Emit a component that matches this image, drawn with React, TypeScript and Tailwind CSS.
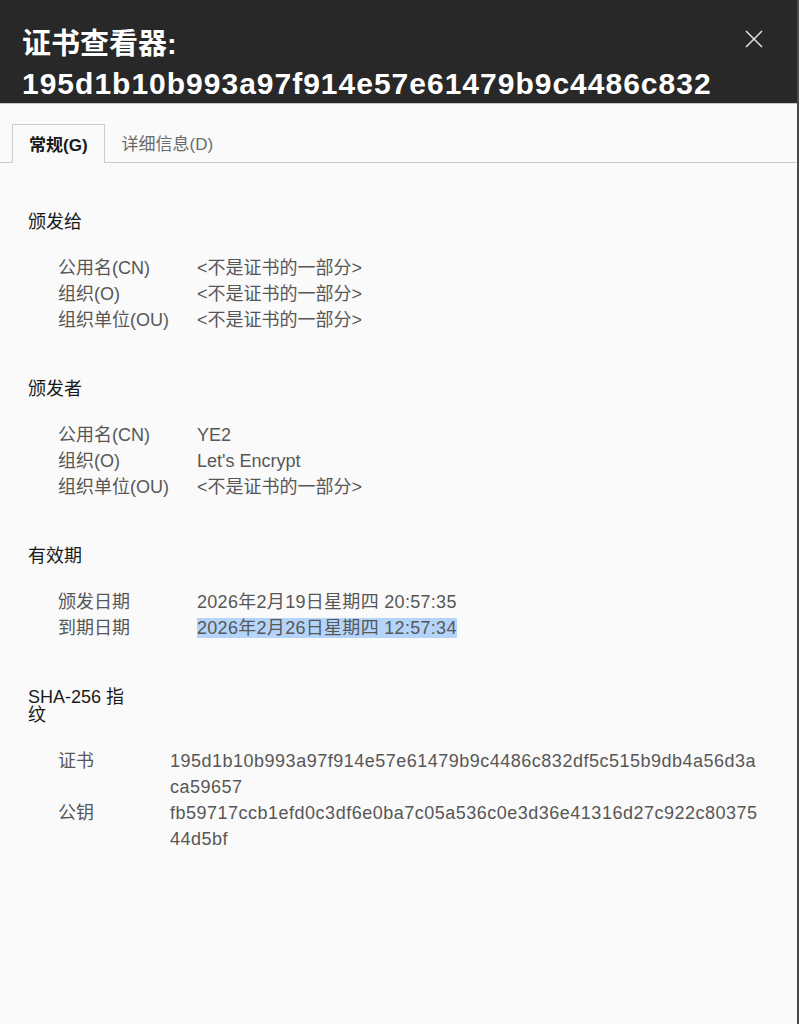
import type { ReactNode } from 'react'

// 证书查看器 — "常规" 页。每个分组一个标题，下面是缩进的 标签/值 两列。

const FONT = { fontFamily: '"Liberation Sans", "Noto Sans CJK SC", sans-serif' }
const NOT_PART = '<不是证书的一部分>'

type Row = { label: string; value: ReactNode }

const sections: { title: string; labelWidth: string; valueClass: string; rows: Row[] }[] = [
  {
    title: '颁发给',
    labelWidth: 'w-[139px]',
    valueClass: 'min-w-0 flex-1',
    rows: [
      { label: '公用名(CN)', value: NOT_PART },
      { label: '组织(O)', value: NOT_PART },
      { label: '组织单位(OU)', value: NOT_PART },
    ],
  },
  {
    title: '颁发者',
    labelWidth: 'w-[139px]',
    valueClass: 'min-w-0 flex-1',
    rows: [
      { label: '公用名(CN)', value: 'YE2' },
      { label: '组织(O)', value: "Let's Encrypt" },
      { label: '组织单位(OU)', value: NOT_PART },
    ],
  },
  {
    title: '有效期',
    labelWidth: 'w-[139px]',
    valueClass: 'min-w-0 flex-1 tracking-[0.3px]',
    rows: [
      { label: '颁发日期', value: '2026年2月19日星期四 20:57:35' },
      {
        label: '到期日期',
        value: <span className="bg-[#b5d4fa]">2026年2月26日星期四 12:57:34</span>,
      },
    ],
  },
  {
    title: 'SHA-256 指纹',
    labelWidth: 'w-[112px]',
    valueClass: 'min-w-0 flex-1 break-all tracking-[0.5px]',
    rows: [
      { label: '证书', value: '195d1b10b993a97f914e57e61479b9c4486c832df5c515b9db4a56d3aca59657' },
      { label: '公钥', value: 'fb59717ccb1efd0c3df6e0ba7c05a536c0e3d36e41316d27c922c8037544d5bf' },
    ],
  },
]

function CloseIcon() {
  return (
    <svg width="20" height="20" viewBox="0 0 20 20" fill="none" stroke="#e0e0e0" strokeWidth="1.6">
      <line x1="2" y1="2" x2="18" y2="18" />
      <line x1="18" y1="2" x2="2" y2="18" />
    </svg>
  )
}

export default function App() {
  return (
    <div className="flex min-h-screen w-full flex-col border-r-2 border-[#4a4a4a] bg-[#fafafa]" style={FONT}>
      {/* 标题栏 */}
      <header className="flex h-[104px] items-start justify-between border-b border-[#c4c4c4] bg-[#282828] pl-[22px] pr-[33px] pt-[24px]">
        <h1 className="text-[29px] font-bold leading-[40px] text-white">
          <div>证书查看器:</div>
          <div className="text-[30px] tracking-[1px]">195d1b10b993a97f914e57e61479b9c4486c832</div>
        </h1>
        <button className="mt-[5px]">
          <CloseIcon />
        </button>
      </header>

      {/* 页签 */}
      <nav className="flex border-b border-[#cccccc] pl-[12px] pt-[20px]">
        <div className="-mb-px flex h-[39px] items-center border border-b-0 border-[#cccccc] bg-[#fafafa] px-[16px] pt-[4px] text-[17px] font-bold text-[#1a1a1a]">
          常规(G)
        </div>
        <div className="flex h-[38px] items-center px-[17px] pt-[4px] text-[17px] text-[#6a6a6a]">详细信息(D)</div>
      </nav>

      <main className="pl-[28px] pr-[36px] pt-[3px]">
        {sections.map((s) => (
          <section key={s.title} className="pt-[47px]">
            <h2 className="w-[105px] text-[18px] leading-[18px] text-[#1a1a1a]">{s.title}</h2>
            <div className="mt-[24px] pl-[30px] text-[18px] leading-[26px] text-[#575757]">
              {s.rows.map((r) => (
                <div key={r.label} className="flex">
                  <div className={`${s.labelWidth} shrink-0`}>{r.label}</div>
                  <div className={s.valueClass}>{r.value}</div>
                </div>
              ))}
            </div>
          </section>
        ))}
      </main>
    </div>
  )
}
